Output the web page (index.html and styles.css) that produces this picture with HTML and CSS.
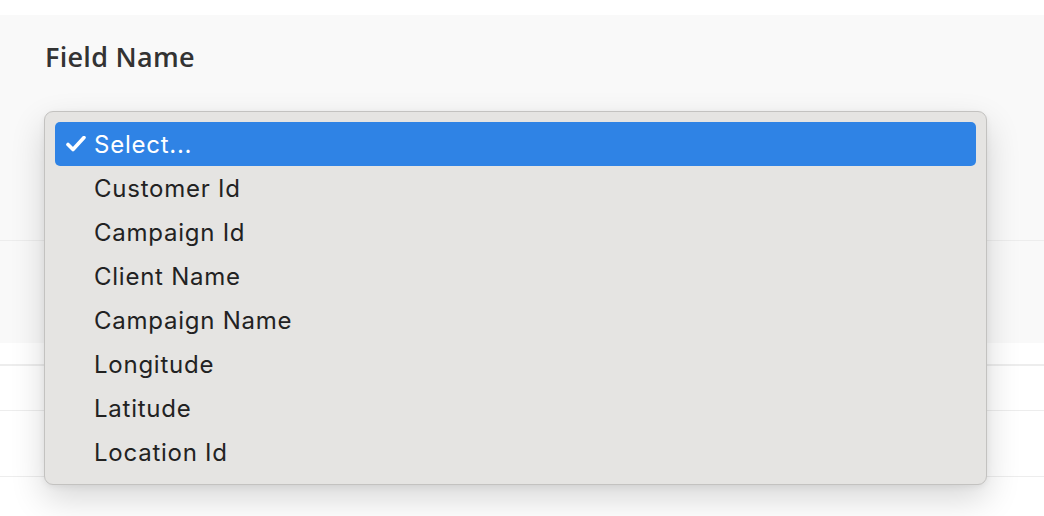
FILE: index.html
```html
<!DOCTYPE html>
<html>
<head>
<meta charset="utf-8">
<link rel="stylesheet" href="styles.css">
</head>
<body>
<div class="page">
  <div class="panel">
    <div class="label">Field Name</div>
  </div>
  <div class="row row-a"></div>
  <div class="row row-b"></div>
  <div class="row row-c"></div>
  <div class="row row-d"></div>
  <div class="row row-e"></div>

  <div class="menu">
    <div class="item selected">
      <svg class="check" width="20" height="16" viewBox="0 0 20 16"><path d="M2 8.5 L7 13.5 L18 1.5" fill="none" stroke="#fff" stroke-width="3.6" stroke-linecap="round" stroke-linejoin="round"/></svg>
      <span>Select...</span>
    </div>
    <div class="item"><span>Customer Id</span></div>
    <div class="item"><span>Campaign Id</span></div>
    <div class="item"><span>Client Name</span></div>
    <div class="item"><span>Campaign Name</span></div>
    <div class="item"><span>Longitude</span></div>
    <div class="item"><span>Latitude</span></div>
    <div class="item"><span>Location Id</span></div>
  </div>
</div>
</body>
</html>
```
FILE: styles.css
```css
html, body {
  margin: 0;
  padding: 0;
  background: #ffffff;
}
.page {
  position: relative;
  width: 1044px;
  height: 516px;
  padding-top: 15px;
  box-sizing: border-box;
  overflow: hidden;
}
.panel {
  height: 225px;
  background: #f9f9f9;
  padding: 28px 0 0 45px;
  box-sizing: border-box;
}
.label {
  font-family: "Open Sans", "Lato", sans-serif;
  font-weight: 600;
  font-size: 27px;
  line-height: 27px;
  letter-spacing: 0.3px;
  color: #333333;
}
.row {
  border-top: 1px solid #ededed;
  box-sizing: border-box;
}
.row-a { height: 103px; background: #f9f9f9; }
.row-b { height: 21px; border-top: none; background: #ffffff; }
.row-c { height: 46px; border-top-width: 2px; }
.row-d { height: 66px; }
.row-e { height: 40px; }

.menu {
  position: absolute;
  left: 44px;
  top: 111px;
  width: 943px;
  height: 374px;
  box-sizing: border-box;
  background: #e5e4e2;
  border: 1px solid #c3c2c0;
  border-radius: 9px;
  padding: 10px 10px;
  box-shadow: 0 14px 34px rgba(0, 0, 0, 0.16), 0 2px 6px rgba(0, 0, 0, 0.06);
}
.item {
  height: 44px;
  display: flex;
  align-items: center;
  padding-left: 39px;
  padding-top: 1px;
  box-sizing: border-box;
  font-family: "Inter", "Noto Sans", sans-serif;
  font-size: 24px;
  letter-spacing: 0.75px;
  color: #222222;
  border-radius: 5px;
  position: relative;
}
.item.selected {
  background: #2f83e5;
  color: #ffffff;
}
.check {
  position: absolute;
  left: 11px;
  top: 14px;
}
```
